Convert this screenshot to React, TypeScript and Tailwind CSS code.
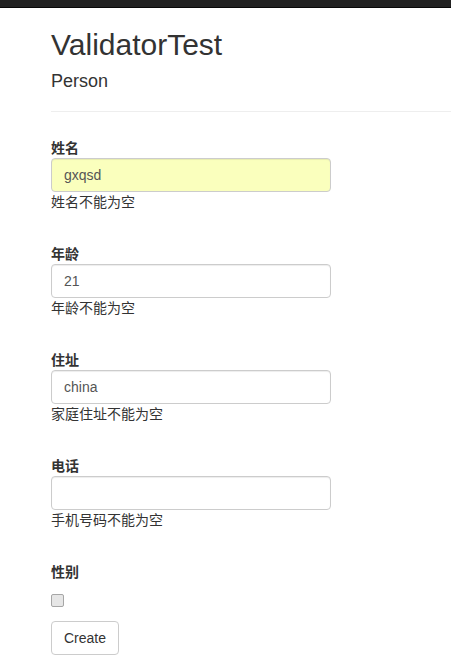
const fields = [
  { label: "姓名", value: "gxqsd", error: "姓名不能为空", autofill: true },
  { label: "年龄", value: "21", error: "年龄不能为空" },
  { label: "住址", value: "china", error: "家庭住址不能为空" },
  { label: "电话", value: "", error: "手机号码不能为空" },
];

const font = {
  fontFamily: '"Liberation Sans", Arial, "Noto Sans CJK SC", sans-serif',
};

export default function App() {
  return (
    <div className="min-h-screen bg-white text-[14px] leading-[20px] text-[#333]" style={font}>
      <div className="h-[8px] border-b border-[#080808] bg-[#222]" />
      <div className="pl-[51px]">
        <h2 className="mt-[20px] mb-[10px] text-[30px] leading-[33px] font-normal">ValidatorTest</h2>
        <h4 className="mt-[10px] mb-[10px] text-[18px] leading-[20px] font-normal">Person</h4>
        <hr className="mt-[20px] mb-[19px] border-t border-[#eee]" />
        <form className="w-[280px]">
          {fields.map((f) => (
            <div key={f.label} className="mb-[25px]">
              <label className="block pt-[7px] text-[14px] font-bold leading-[20px]">{f.label}</label>
              <input
                defaultValue={f.value}
                className={
                  "block h-[34px] w-[280px] rounded-[4px] border border-[#ccc] px-[12px] py-[6px] text-[14px] text-[#555] shadow-[inset_0_1px_1px_rgba(0,0,0,0.075)] outline-none " +
                  (f.autofill ? "bg-[#faffbd]" : "bg-white")
                }
              />
              <span className="block text-[14px] leading-[20px]">{f.error}</span>
            </div>
          ))}
          <label className="block pt-[7px] text-[14px] font-bold leading-[20px]">性别</label>
          <div className="mt-[12px]">
            <input
              type="checkbox"
              className="block h-[13px] w-[13px] appearance-none rounded-[2px] border border-[#a6a6a6] bg-[#e6e6e6]"
            />
          </div>
          <button
            type="button"
            className="mt-[14px] h-[34px] rounded-[4px] border border-[#ccc] bg-white px-[12px] text-[14px] text-[#333]"
          >
            Create
          </button>
        </form>
      </div>
    </div>
  );
}
